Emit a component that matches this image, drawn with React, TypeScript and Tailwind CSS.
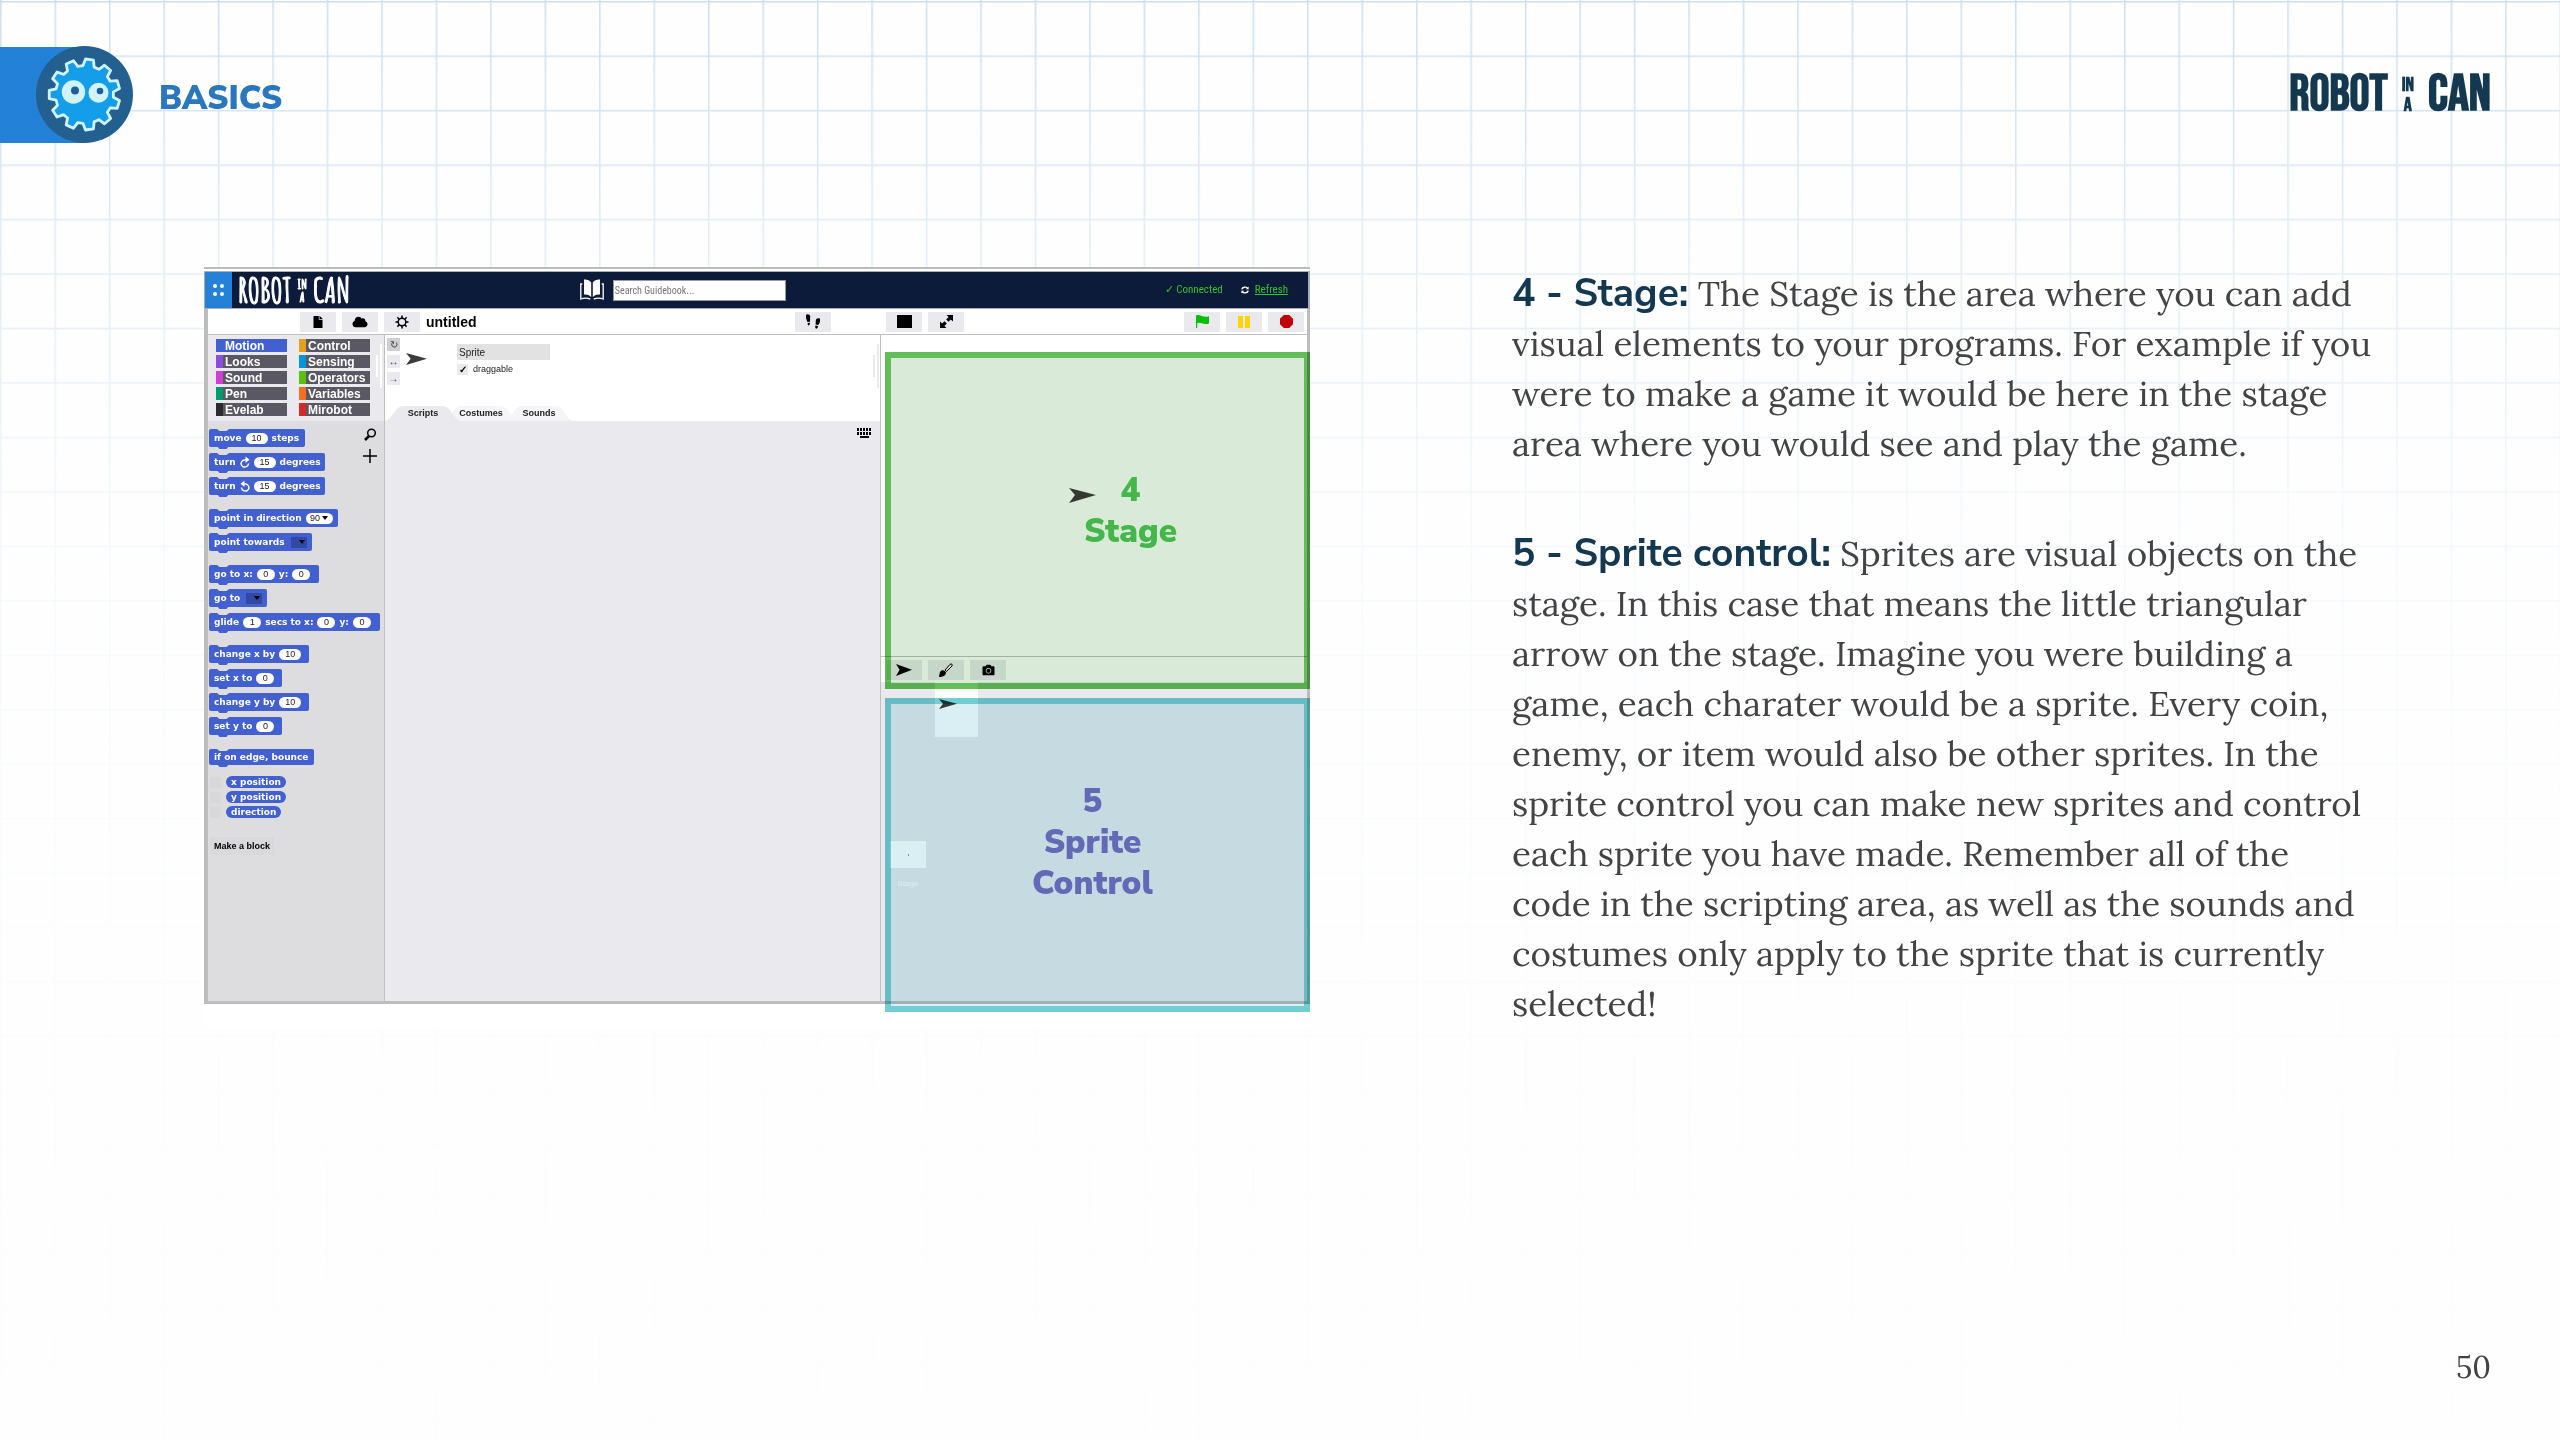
import React from "react";
import { FaCloud, FaFile, FaCamera } from "react-icons/fa";

function gearPath(cx: number, cy: number, teeth: number, outer: number, inner: number, start: number) {
  const step = 360 / teeth;
  const pt = (r: number, deg: number) => {
    const a = ((deg - 90) * Math.PI) / 180;
    return `${(cx + r * Math.cos(a)).toFixed(2)} ${(cy + r * Math.sin(a)).toFixed(2)}`;
  };
  const parts: string[] = [];
  for (let i = 0; i < teeth; i++) {
    const c = start + i * step;
    parts.push(`${i === 0 ? "M" : "L"}${pt(inner, c - step * 0.34)}`);
    parts.push(`L${pt(outer, c - step * 0.2)}`);
    parts.push(`L${pt(outer, c + step * 0.2)}`);
    parts.push(`L${pt(inner, c + step * 0.34)}`);
  }
  return parts.join(" ") + "Z";
}

function GridPaper() {
  return (
    <svg className="pointer-events-none absolute inset-0 h-full w-full" aria-hidden="true">
      <defs>
        <pattern id="cells" width="54.46" height="54.46" patternUnits="userSpaceOnUse" y="1">
          <path d="M0 0.75H54.46M0.75 0V54.46" stroke="#cbdff1" strokeWidth="1.5" fill="none" />
        </pattern>
        <linearGradient id="fade" x1="0" y1="0" x2="0" y2="1">
          <stop offset="0" stopColor="#fff" stopOpacity="1" />
          <stop offset="0.18" stopColor="#fff" stopOpacity="0.55" />
          <stop offset="0.35" stopColor="#fff" stopOpacity="0.2" />
          <stop offset="0.6" stopColor="#fff" stopOpacity="0.07" />
          <stop offset="1" stopColor="#fff" stopOpacity="0.03" />
        </linearGradient>
        <mask id="fadeMask">
          <rect width="100%" height="100%" fill="url(#fade)" />
        </mask>
      </defs>
      <rect width="100%" height="100%" fill="url(#cells)" mask="url(#fadeMask)" />
    </svg>
  );
}

function GearBadge() {
  return (
    <svg viewBox="0 0 97 97" className="h-[97px] w-[97px]" aria-hidden="true">
      <circle cx="48.5" cy="48.5" r="48.5" fill="#23608f" />
      <path d={gearPath(48.5, 48.5, 11, 35.5, 29, 8.2)} fill="#149de9" stroke="#d0f3fd" strokeWidth="2.8" strokeLinejoin="round" />
      <circle cx="37.5" cy="46" r="11.7" fill="#d0f3fd" />
      <circle cx="39" cy="44.5" r="4" fill="#1d5f9e" />
      <circle cx="62.5" cy="46.7" r="10" fill="#d0f3fd" />
      <circle cx="64" cy="45" r="3.3" fill="#1d5f9e" />
    </svg>
  );
}

function Logo({ small }: { small?: boolean }) {
  return small ? (
    <div className="flex items-center gap-1.5 font-['Amatic_SC','Roboto_Condensed',sans-serif] font-bold text-white [-webkit-text-stroke:1px_white]">
      <span className="text-[34px] leading-9">ROBOT</span>
      <span className="flex flex-col items-center text-[14px] leading-[13px]">
        <span>IN</span>
        <span>A</span>
      </span>
      <span className="text-[34px] leading-9">CAN</span>
    </div>
  ) : (
    <div className="flex items-center gap-3.5 font-['Bebas_Neue','Roboto_Condensed',sans-serif] font-bold text-[#14384f]">
      <span className="text-[50px] leading-[50px]">ROBOT</span>
      <span className="flex flex-col items-center text-[20px] leading-5">
        <span>IN</span>
        <span>A</span>
      </span>
      <span className="text-[52px] leading-[50px]">CAN</span>
    </div>
  );
}

function SpriteArrow({ className, fill = "#3c3c3c" }: { className?: string; fill?: string }) {
  return (
    <svg viewBox="0 0 27 16" preserveAspectRatio="none" className={className} aria-hidden="true">
      <path d="M0 0 27 7.5 0 16 6 7.5Z" fill={fill} />
    </svg>
  );
}

function ToolButton({ label, children }: { label: string; children: React.ReactNode }) {
  return (
    <button type="button" aria-label={label} className="flex h-5 w-9 shrink-0 items-center justify-center bg-[#e9e9ee] text-black">
      {children}
    </button>
  );
}

function EditorHeader() {
  return (
    <div className="flex h-9 items-center bg-[#0d1b3a] pr-5 font-['Roboto_Condensed',sans-serif]">
      <button type="button" aria-label="Menu" className="mr-1.5 grid h-9 w-[27px] grid-cols-2 place-content-center gap-x-0.5 gap-y-1 bg-[#2381d8] px-2">
        {[0, 1, 2, 3].map((i) => (
          <span key={i} className="h-1 w-1 rounded-full bg-white" />
        ))}
      </button>
      <Logo small />
      <div className="flex-[232]" />
      <svg viewBox="0 0 24 22" className="mr-[9px] h-[22px] w-6" aria-hidden="true">
        <path d="M11.2 3.5C9.500 1 6.500 .3 4 .6V15.500c3-.2 5.500.6 7.200 2.500ZM12.800 3.500C14.500 1 17.500 .3 20 .6V15.500c-3-.2-5.500.6-7.200 2.500Z" fill="#fff" />
        <path d="M2.300 5H.8V20c3.500-1.200 7-1 9.500.2M21.700 5h1.500V20c-3.500-1.200-7-1-9.500.2" fill="none" stroke="#fff" strokeWidth="1.300" />
      </svg>
      <input
        aria-label="Search Guidebook"
        placeholder="Search Guidebook..."
        className="h-[21px] w-[173px] rounded-none border border-[#999] bg-white px-px text-[10px] text-black placeholder:text-[#777]"
      />
      <div className="flex-[383]" />
      <span className="text-[11px] text-[#2fc42f]">✓ Connected</span>
      <svg viewBox="0 0 10 10" className="mr-1.5 ml-[18px] h-2.5 w-2" fill="none" stroke="#fff" strokeWidth="1.800" aria-hidden="true">
        <path d="M1 4.200C1.500 1 7 .6 8.500 3M9 5.800C8.500 9 3 9.400 1.500 7" />
        <path d="M9.500 .5V4H6ZM.5 9.500V6H4Z" fill="#fff" stroke="none" />
      </svg>
      <a href="#refresh" className="text-[11px] text-[#2fc42f] underline">
        Refresh
      </a>
    </div>
  );
}

function Toolbar() {
  return (
    <div className="flex h-[26px] border-b border-[#bfbfbf] bg-white">
      <div className="flex flex-1 items-center gap-1.5 pr-[50px] pl-[92px]">
        <ToolButton label="File">
          <FaFile className="h-3 w-2.5" />
        </ToolButton>
        <ToolButton label="Cloud">
          <FaCloud className="h-3 w-4" />
        </ToolButton>
        <ToolButton label="Settings">
          <svg viewBox="0 0 14 14" className="h-3.5 w-3.5" fill="none" stroke="#000" strokeWidth="1.500" aria-hidden="true">
            <circle cx="7" cy="7" r="3.800" />
            <path d="M7 .5V3M7 11v2.500M.5 7H3M11 7h2.500M2.400 2.400 4.200 4.200M9.800 9.800l1.800 1.800M2.400 11.600 4.200 9.800M9.800 4.200l1.800-1.800" />
          </svg>
        </ToolButton>
        <span className="mr-auto text-[14px] leading-5 font-bold text-black">untitled</span>
        <ToolButton label="Visible stepping">
          <svg viewBox="0 0 16 15" className="h-[15px] w-4" aria-hidden="true">
            <path d="M1 .8C2.500-.3 5 .3 5.200 2.500L5 7.800 2.400 8 1 4ZM2.600 9l2.300-.2C5.200 11.500 3.200 12 2.800 10.800ZM15 4.800c-1.500-1-4-.5-4.200 1.700L10.600 10.600l2.700.4L15 8ZM10.400 11.600l2.600.5c-.2 2.900-2.500 3.200-2.800 1.500Z" fill="#000" />
          </svg>
        </ToolButton>
      </div>
      <div className="flex w-[426px] items-center gap-1.5 pr-[3px] pl-[5px]">
        <ToolButton label="Stage size">
          <span className="h-[13px] w-[15px] bg-black" />
        </ToolButton>
        <ToolButton label="Full screen">
          <svg viewBox="0 0 13 13" className="h-[13px] w-[13px]" aria-hidden="true">
            <path d="M6.500 0H13V6.500L10.900 4.400 8.500 6.800 6.200 4.500 8.600 2.100ZM6.500 13H0V6.500L2.100 8.600 4.500 6.200 6.800 8.500 4.400 10.900Z" fill="#000" />
          </svg>
        </ToolButton>
        <span className="flex-1" />
        <ToolButton label="Start">
          <svg viewBox="0 0 13 13" className="h-[13px] w-[13px]" aria-hidden="true">
            <path d="M0 .5 1.200 0C5-.3 7 3 13 1.200V8.500C8 10.500 5 6.500 1.200 8.200V13H0Z" fill="#00c000" />
          </svg>
        </ToolButton>
        <ToolButton label="Pause">
          <span className="flex gap-0.5">
            <span className="h-3 w-[5px] bg-[#ffd500]" />
            <span className="h-3 w-[5px] bg-[#ffd500]" />
          </span>
        </ToolButton>
        <ToolButton label="Stop">
          <svg viewBox="0 0 13 13" className="h-[13px] w-[13px]" aria-hidden="true">
            <path d="M3.800 0h5.400L13 3.800v5.400L9.200 13H3.800L0 9.200V3.800Z" fill="#c00000" />
          </svg>
        </ToolButton>
      </div>
    </div>
  );
}

const categories = [
  { name: "Motion", swatch: "bg-[#4260cf]", row: "bg-[#4260cf]" },
  { name: "Control", swatch: "bg-[#e6a01e]", row: "bg-[#5a5963]" },
  { name: "Looks", swatch: "bg-[#8a4fdc]", row: "bg-[#5a5963]" },
  { name: "Sensing", swatch: "bg-[#0494dc]", row: "bg-[#5a5963]" },
  { name: "Sound", swatch: "bg-[#cf3fd8]", row: "bg-[#5a5963]" },
  { name: "Operators", swatch: "bg-[#5ac012]", row: "bg-[#5a5963]" },
  { name: "Pen", swatch: "bg-[#009a6f]", row: "bg-[#5a5963]" },
  { name: "Variables", swatch: "bg-[#f3701c]", row: "bg-[#5a5963]" },
  { name: "Evelab", swatch: "bg-[#2b2b2b]", row: "bg-[#5a5963]" },
  { name: "Mirobot", swatch: "bg-[#d62828]", row: "bg-[#5a5963]" },
];

function Categories() {
  return (
    <div className="relative h-[86px] bg-[#e9e9ee] pt-[4px] pl-2">
      <div className="grid w-[154px] grid-cols-2 gap-x-3 gap-y-[3px]">
        {categories.map((c) => (
          <button key={c.name} type="button" className={`flex h-[13px] overflow-hidden ${c.row}`}>
            <span className={`mr-0.5 h-full w-[7px] ${c.swatch}`} />
            <span className="text-[12px] leading-[15px] font-bold text-white">{c.name}</span>
          </button>
        ))}
      </div>
      <span className="absolute top-[9px] right-[2px] h-11 w-0.5 bg-white" />
      <span className="absolute top-[20px] right-[6px] h-[22px] w-0.5 bg-white" />
    </div>
  );
}

function Turn({ flip }: { flip?: boolean }) {
  return (
    <svg viewBox="0 0 10 12" className={flip ? "h-3 w-2.5 -scale-x-100" : "h-3 w-2.5"} fill="none" stroke="#fff" aria-hidden="true">
      <path d="M6 3.800C1.500 3.300-.3 8 2.500 10.300 5 12 8.300 10.500 8.600 7.500" strokeWidth="1.400" />
      <path d="M5.500 .5 9.500 3.800 5.500 7Z" fill="#fff" stroke="none" />
    </svg>
  );
}

function Num({ value, wide }: { value: string; wide?: boolean }) {
  return (
    <span
      className={`flex h-[11px] items-center justify-center rounded-full bg-white font-['Liberation_Sans',sans-serif] text-[9px] leading-none font-normal text-[#222] ${wide ? "w-[22px]" : "w-[18px]"}`}
    >
      {value}
    </span>
  );
}

function Caret() {
  return <span className="h-0 w-0 border-x-[3px] border-t-[4px] border-x-transparent border-t-black" />;
}

function Slot() {
  return (
    <span className="ml-0.5 flex h-[11px] w-4 items-center justify-end bg-[#3148a4] pr-0.5">
      <Caret />
    </span>
  );
}

function Block({ width, gap, short, children }: { width: string; gap?: boolean; short?: boolean; children: React.ReactNode }) {
  return (
    <div
      className={`relative flex items-center gap-1 rounded-[2px] bg-[#4260cf] pl-[5px] whitespace-nowrap ${width} ${short ? "h-4" : "h-[18px]"} ${gap ? "mt-3.5" : "mt-1.5"}`}
    >
      <svg viewBox="0 0 12 3" className="absolute top-0 left-2 h-[3px] w-3" aria-hidden="true">
        <path d="M0 0H12L9.500 2H2.500Z" fill="#dddddf" />
      </svg>
      <svg viewBox="0 0 12 3" className="absolute -bottom-[2px] left-2 h-[3px] w-3" aria-hidden="true">
        <path d="M0 0H12L9.500 3H2.500Z" fill="#4260cf" />
      </svg>
      {children}
    </div>
  );
}

function Palette() {
  return (
    <div className="relative flex flex-1 flex-col items-start bg-[#dddddf] pt-[2px] pl-px font-['DejaVu_Sans',sans-serif] text-[9px] leading-none font-bold text-white">
      <Block width="w-24">
        <span>move</span>
        <Num value="10" wide />
        <span>steps</span>
      </Block>
      <Block width="w-[116px]">
        <span>turn</span>
        <Turn />
        <Num value="15" wide />
        <span>degrees</span>
      </Block>
      <Block width="w-[116px]">
        <span>turn</span>
        <Turn flip />
        <Num value="15" wide />
        <span>degrees</span>
      </Block>
      <Block width="w-[129px]" gap>
        <span>point in direction</span>
        <span className="flex h-[11px] w-[27px] items-center justify-center gap-0.5 rounded-full bg-white font-['Liberation_Sans',sans-serif] font-normal text-[#222]">
          90 <Caret />
        </span>
      </Block>
      <Block width="w-[103px]">
        <span>point towards</span>
        <Slot />
      </Block>
      <Block width="w-[110px]" gap>
        <span>go to x:</span>
        <Num value="0" />
        <span>y:</span>
        <Num value="0" />
      </Block>
      <Block width="w-[58px]">
        <span>go to</span>
        <Slot />
      </Block>
      <Block width="w-[171px]">
        <span>glide</span>
        <Num value="1" />
        <span>secs to x:</span>
        <Num value="0" />
        <span>y:</span>
        <Num value="0" />
      </Block>
      <Block width="w-[100px]" gap>
        <span>change x by</span>
        <Num value="10" wide />
      </Block>
      <Block width="w-[73px]">
        <span>set x to</span>
        <Num value="0" />
      </Block>
      <Block width="w-[100px]">
        <span>change y by</span>
        <Num value="10" wide />
      </Block>
      <Block width="w-[73px]">
        <span>set y to</span>
        <Num value="0" />
      </Block>
      <Block width="w-[105px]" gap short>
        <span>if on edge, bounce</span>
      </Block>
      <div className="mt-[11px] flex flex-col gap-[3px] pl-px">
        {["x position", "y position", "direction"].map((name) => (
          <div key={name} className="flex h-3 items-center gap-[5px]">
            <span className="h-[11px] w-[11px] bg-[#d8d8d9]" />
            <span className="flex h-3 items-center rounded-full bg-[#4260cf] px-[5px]">{name}</span>
          </div>
        ))}
      </div>
      <button type="button" className="mt-[19px] ml-px h-[18px] bg-[#d9d9da] px-1 font-['Liberation_Sans',sans-serif] text-[9px] leading-none font-bold text-black">
        Make a block
      </button>
      <div className="absolute top-[7px] right-[7px] flex flex-col items-center gap-2">
        <svg viewBox="0 0 13 13" className="h-[13px] w-[13px]" fill="none" stroke="#000" aria-hidden="true">
          <circle cx="7.500" cy="5" r="3.800" strokeWidth="1.500" />
          <path d="M5 8 1 12" strokeWidth="2.500" />
        </svg>
        <svg viewBox="0 0 14 14" className="h-3.5 w-3.5" stroke="#000" strokeWidth="1.500" aria-hidden="true">
          <path d="M7 0V14M0 7H14" />
        </svg>
      </div>
    </div>
  );
}

function Tab({ label, active, className }: { label: string; active?: boolean; className: string }) {
  return (
    <button type="button" className={`relative h-4 text-[9px] leading-4 font-bold text-[#222] ${className}`}>
      <svg viewBox="0 0 80 16" preserveAspectRatio="none" className="absolute inset-0 h-full w-full" aria-hidden="true">
        <path d="M0 16C8 15 10 1 20 1H60C70 1 72 15 80 16Z" fill={active ? "#e9e9ee" : "#f5f5f8"} />
      </svg>
      <span className="relative">{label}</span>
    </button>
  );
}

function KeyboardIcon() {
  const rows = [0, 4];
  const cols = [0, 3, 6, 9, 12];
  return (
    <svg viewBox="0 0 15 10" className="h-2.5 w-[15px]" aria-hidden="true">
      {rows.map((y) => cols.map((x) => <rect key={`${x}-${y}`} x={x} y={y} width="2" height="3" />))}
      <rect x="3" y="8" width="9" height="2" />
    </svg>
  );
}

function ScriptingArea() {
  return (
    <div className="flex flex-1 flex-col border-x border-[#bfbfbf] bg-[#e9e9ee]">
      <div className="relative flex h-[86px] flex-col justify-between bg-white">
        <div className="flex pt-[3px] pl-0.5">
          <div className="flex flex-col gap-1 text-[10px] leading-none text-[#444]">
            <span className="flex h-[13px] w-[13px] items-center justify-center bg-[#cfcfd3]">↻</span>
            <span className="flex h-[13px] w-[13px] items-center justify-center bg-[#e9e9ee]">↔</span>
            <span className="flex h-[13px] w-[13px] items-center justify-center bg-[#e9e9ee]">→</span>
          </div>
          <SpriteArrow className="mt-[15px] ml-[6px] h-3 w-[21px]" />
          <div className="ml-[30px] flex flex-col gap-1 pt-1.5">
            <input aria-label="Sprite name" defaultValue="Sprite" className="h-4 w-[93px] bg-[#e2e2e2] px-0.5 text-[10px] text-[#222]" />
            <label className="flex items-center gap-[5px] text-[9px] leading-[11px] text-[#222]">
              <input type="checkbox" defaultChecked className="peer sr-only" />
              <span className="flex h-[11px] w-[11px] items-center justify-center bg-[#e9e9ee] text-[10px] font-bold text-black">✓</span>
              draggable
            </label>
          </div>
        </div>
        <div className="flex">
          <Tab label="Scripts" active className="z-10 w-[76px]" />
          <Tab label="Costumes" className="-ml-[18px] w-[76px]" />
          <Tab label="Sounds" className="-ml-[14px] w-[68px]" />
        </div>
        <span className="absolute top-[9px] right-px h-11 w-0.5 bg-[#e9e9ee]" />
        <span className="absolute top-[20px] right-[5px] h-[22px] w-0.5 bg-[#e9e9ee]" />
      </div>
      <div className="flex justify-end pt-[7px] pr-2">
        <KeyboardIcon />
      </div>
    </div>
  );
}

function StageColumn() {
  return (
    <div className="relative flex w-[426px] flex-col">
      <div className="relative h-[322px] border-b border-[#bfbfbf] bg-white">
        <SpriteArrow className="absolute top-[153px] left-[188px] h-[15px] w-[27px]" />
      </div>
      <div className="flex h-[25px] items-center gap-1.5 bg-white pl-[5px]">
        <ToolButton label="New sprite">
          <SpriteArrow className="h-3 w-4" fill="#000" />
        </ToolButton>
        <ToolButton label="Paint sprite">
          <svg viewBox="0 0 14 14" className="h-3.5 w-3.5" aria-hidden="true">
            <path d="M6 7 11 1.300C12.500 .3 13.800 1.500 13 3L7.500 8.500Z" fill="none" stroke="#000" />
            <path d="M0 14C.5 12 .3 10.500 1.200 8.800 3 6.500 5.500 7 7 9.500 7 12.500 4 14 0 14Z" fill="#000" />
          </svg>
        </ToolButton>
        <ToolButton label="Camera">
          <FaCamera className="h-3 w-[13px]" />
        </ToolButton>
      </div>
      <div className="flex flex-1 bg-[#e9e9ee] pl-[9px]">
        <div className="flex w-[45px] flex-col items-start pt-[159px]">
          <span className="flex h-[27px] w-9 items-center justify-center bg-white">
            <span className="h-0.5 w-px bg-[#999]" />
          </span>
          <span className="mt-[11px] w-9 text-center text-[8px] leading-[10px] text-white">Stage</span>
        </div>
        <div className="h-[55px] w-[43px] bg-white pt-[17px] pl-1">
          <SpriteArrow className="h-2.5 w-[18px]" />
        </div>
      </div>

      <div className="absolute top-[17px] -right-[3px] left-1 h-[337px] border-[6px] border-[#63bd58] bg-[#d9ebd8] mix-blend-multiply" />
      <div className="absolute top-[17px] -right-[3px] left-1 h-[337px] pt-[118px] pl-[66px] text-center font-['Nunito_Sans',sans-serif] text-[33px] leading-[41px] font-black text-[#44b64a]">
        4<br />
        Stage
      </div>
      <div className="absolute top-[363px] -right-[3px] left-1 h-[314px] border-[6px] border-[#73ced2] bg-[#d9eff3] mix-blend-multiply" />
      <div className="absolute top-[363px] -right-[3px] left-1 h-[314px] pt-[83px] pr-[10px] text-center font-['Nunito_Sans',sans-serif] text-[33px] leading-[41px] font-black text-[#6469b6]">
        5<br />
        Sprite
        <br />
        Control
      </div>
    </div>
  );
}

function Editor() {
  return (
    <div className="border-t-2 border-[#bbbbbb] bg-white pt-0.5 font-['Liberation_Sans',sans-serif]">
      <div className="border-y border-r-2 border-l border-[#a9adb5]">
        <EditorHeader />
      </div>
      <div className="border-x-[3px] border-b-[3px] border-l-4 border-[#bdbdbd]">
        <Toolbar />
        <div className="flex min-h-[666px]">
          <div className="flex w-[176px] flex-col">
            <Categories />
            <Palette />
          </div>
          <ScriptingArea />
          <StageColumn />
        </div>
      </div>
    </div>
  );
}

export default function App() {
  return (
    <div className="relative flex min-h-screen flex-col bg-[#fefefe]">
      <GridPaper />
      <header className="relative flex items-center justify-between pt-[46px] pr-[69px]">
        <div className="flex items-center">
          <div className="h-24 w-[84px] bg-[#2381d8]" />
          <div className="-ml-12">
            <GearBadge />
          </div>
          <h1 className="ml-[26px] pt-2 font-['Nunito_Sans',sans-serif] text-[33px] leading-10 font-black text-[#2b77bd]">BASICS</h1>
        </div>
        <Logo />
      </header>
      <main className="relative mt-[124px] grid grid-cols-[1106fr_862fr] gap-[202px] pr-[186px] pl-[204px]">
        <Editor />
        <div className="flex flex-col gap-[60px] pt-0.5 font-['Lora',serif] text-[35px] leading-[50px] text-[#434345]">
          <p>
            <b className="font-['Nunito_Sans',sans-serif] text-[39px] leading-none font-bold text-[#14384f]">4 - Stage:</b> The Stage is the area where you can
            add visual elements to your programs. For example if you were to make a game it would be here in the stage area where you would see and play the
            game.
          </p>
          <p>
            <b className="font-['Nunito_Sans',sans-serif] text-[39px] leading-none font-bold text-[#14384f]">5 - Sprite control:</b> Sprites are visual objects
            on the stage. In this case that means the little triangular arrow on the stage. Imagine you were building a game, each charater would be a sprite.
            Every coin, enemy, or item would also be other sprites. In the sprite control you can make new sprites and control each sprite you have made.
            Remember all of the code in the scripting area, as well as the sounds and costumes only apply to the sprite that is currently selected!
          </p>
        </div>
      </main>
      <footer className="relative mt-auto flex justify-end pr-[69px] pb-12 font-['Lora',serif] text-[30px] leading-[50px] text-[#434345]">50</footer>
    </div>
  );
}
